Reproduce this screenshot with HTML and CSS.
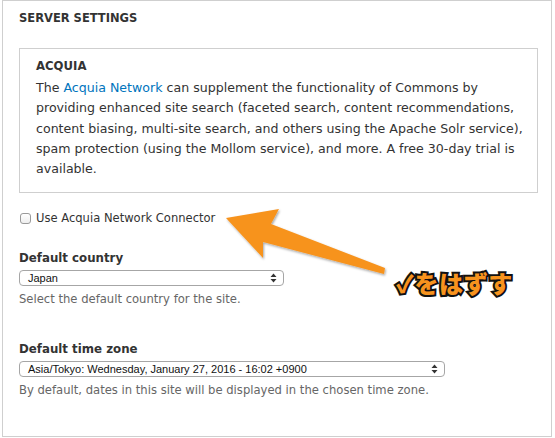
FILE: index.html
```html
<!DOCTYPE html>
<html>
<head>
<meta charset="utf-8">
<link rel="stylesheet" href="styles.css">
</head>
<body>
<div class="panel">
  <h2 class="panel-title">SERVER SETTINGS</h2>
  <div class="acquia">
    <h3 class="acquia-title">ACQUIA</h3>
    <p class="acquia-text">The <a href="#" class="link">Acquia Network</a> can supplement the functionality of Commons by providing enhanced site search (faceted search, content recommendations, content biasing, multi-site search, and others using the Apache Solr service), spam protection (using the Mollom service), and more. A free 30-day trial is available.</p>
  </div>
  <label class="check-row"><span class="checkbox"></span><span>Use Acquia Network Connector</span></label>

  <div class="field field-country">
    <div class="field-label">Default country</div>
    <div class="select select-country"><span class="select-text">Japan</span><svg class="updown" width="7" height="10" viewBox="0 0 7 10"><path d="M3.5 0.5 L6.5 4 L0.5 4 Z M3.5 9.5 L6.5 6 L0.5 6 Z" fill="#333"/></svg></div>
    <div class="field-desc">Select the default country for the site.</div>
  </div>

  <div class="field field-tz">
    <div class="field-label">Default time zone</div>
    <div class="select select-tz"><span class="select-text">Asia/Tokyo: Wednesday, January 27, 2016 - 16:02 +0900</span><svg class="updown" width="7" height="10" viewBox="0 0 7 10"><path d="M3.5 0.5 L6.5 4 L0.5 4 Z M3.5 9.5 L6.5 6 L0.5 6 Z" fill="#333"/></svg></div>
    <div class="field-desc">By default, dates in this site will be displayed in the chosen time zone.</div>
  </div>
</div>

<svg class="arrow" width="555" height="438" viewBox="0 0 555 438">
  <defs>
    <filter id="sh" x="-10%" y="-10%" width="130%" height="130%">
      <feDropShadow dx="1" dy="1.5" stdDeviation="1.2" flood-color="#000" flood-opacity="0.35"/>
    </filter>
  </defs>
  <polygon filter="url(#sh)" fill="#f7931e" points="226,218 279,209 271,224 385,268 384,274 263,242 263,258"/>
</svg>
<div class="callout">✓をはずす</div>
</body>
</html>
```

FILE: styles.css
```css
html, body {
  margin: 0;
  padding: 0;
  background: #fff;
}
body {
  width: 555px;
  height: 438px;
  overflow: hidden;
  position: relative;
  font-family: "DejaVu Sans", "Noto Sans", sans-serif;
  color: #333;
}
.panel {
  box-sizing: border-box;
  margin: 0 3px 0 2px;
  height: 437px;
  border: 1px solid #cfcfcf;
  padding: 9px 13px 0 16px;
}
.panel-title {
  margin: 0;
  font-size: 11.5px;
  font-weight: bold;
  line-height: 16px;
  color: #333;
}
.acquia {
  margin-top: 22px;
  border: 1px solid #cfcfcf;
  height: 145px;
  box-sizing: border-box;
  padding: 9px 0 0 16px;
}
.acquia-title {
  margin: 0;
  font-size: 11.7px;
  font-weight: bold;
  line-height: 16px;
}
.acquia-text {
  margin: 4px 0 0;
  font-size: 12.6px;
  line-height: 20.3px;
  color: #333;
}
.link {
  color: #0074bd;
  text-decoration: none;
}
.check-row {
  display: flex;
  align-items: center;
  gap: 5px;
  margin-top: 17px;
  font-size: 11.55px;
  line-height: 16px;
  color: #333;
}
.checkbox {
  width: 11px;
  height: 11px;
  border: 1px solid #9a9a9a;
  border-radius: 3px;
  background: linear-gradient(#fff, #eee);
  box-sizing: border-box;
  margin-left: 1px;
  margin-top: 1px;
}
.field-country {
  margin-top: 24px;
}
.field-tz {
  margin-top: 34px;
}
.field-label {
  font-size: 11.8px;
  font-weight: bold;
  line-height: 16px;
  color: #333;
}
.select {
  display: flex;
  align-items: center;
  justify-content: space-between;
  box-sizing: border-box;
  height: 16px;
  margin-top: 4px;
  border: 1px solid #a6a6a6;
  border-radius: 4px;
  background: #fff;
  padding: 0 6px 0 8px;
  font-family: "Liberation Sans", Arial, sans-serif;
  font-size: 11px;
  color: #111;
}
.select-country {
  width: 265px;
}
.select-tz {
  width: 426px;
}
.select-text {
  line-height: 14px;
}
.updown {
  display: block;
}
.field-desc {
  margin-top: 5px;
  font-size: 11.6px;
  line-height: 16px;
  color: #666;
}
.arrow {
  position: absolute;
  left: 0;
  top: 0;
  pointer-events: none;
}
.callout {
  position: absolute;
  left: 396px;
  top: 268px;
  font-family: "Noto Sans CJK JP", sans-serif;
  font-weight: 900;
  font-size: 24px;
  line-height: 30px;
  color: #f7931e;
  -webkit-text-stroke: 4px #111;
  paint-order: stroke fill;
  letter-spacing: 0.6px;
}
```
